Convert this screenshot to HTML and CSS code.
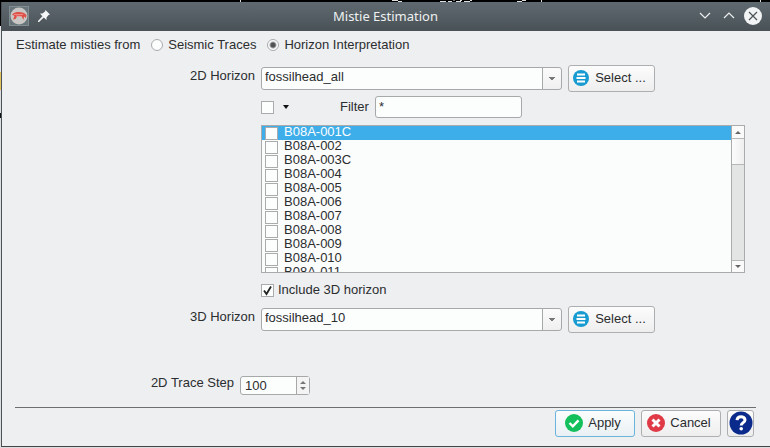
FILE: index.html
```html
<!DOCTYPE html>
<html lang="en">
<head>
<meta charset="utf-8">
<title>Mistie Estimation</title>
<link rel="stylesheet" href="styles.css">
</head>
<body>
<svg class="backdrop" height="2" width="770" aria-hidden="true"><path d="M240.500 0v2M541.500 0v2M760.500 0v2M392 .5h6M398 1.500h4M440 1.500h6M453 0h2M460 .5h2M470 .5h2M448 1.500h4M456 1.500h5M464 1.500h6M517 1.500h5M522 .5h4" stroke="#ddd"/></svg>
<main class="window">
  <header class="titlebar">
    <div class="title-left">
      <svg width="20" height="20" viewBox="0 0 20 20" aria-hidden="true"><rect x=".5" y=".5" width="19" height="19" fill="#68757a" stroke="#7f8d91"/><circle cx="10" cy="10" r="8.500" fill="#c9c7c5"/><path d="M3 8.500c2-2 4-2.500 7-2.500s6 1 7.500 3l-.5 3-2-1.500-.5 3.500-2-3.500-4-.5-2 3-2.500.5 1.500-3.500z" fill="#df5148"/><path d="M5 8.500h9M7 10l6 .5" stroke="#f4a49d" stroke-width=".7"/></svg>
      <svg width="12" height="12" viewBox="0 0 12 12" aria-hidden="true"><path d="M7.500 0L12 4.500 10.500 5 8.500 7.500V10L5.800 7.600 1 12H0v-1l4.400-4.800L2 3.500h2.500L7 1.500z" fill="#f5f7f8"/></svg>
    </div>
    <h1>Mistie Estimation</h1>
    <div class="title-right">
      <button class="wm" aria-label="Minimize"><svg width="18" height="18" viewBox="0 0 18 18"><path d="M4 6l5 5 5-5" fill="none" stroke="#eef0f1" stroke-width="1.200"/></svg></button>
      <button class="wm" aria-label="Maximize"><svg width="18" height="18" viewBox="0 0 18 18"><path d="M4 11l5-5 5 5" fill="none" stroke="#eef0f1" stroke-width="1.200"/></svg></button>
      <button class="wm" aria-label="Close"><svg width="18" height="18" viewBox="0 0 18 18"><circle cx="9" cy="9" r="9" fill="#f1f3f4"/><path d="M5 5l8 8M13 5l-8 8" stroke="#4b5358" stroke-width="1.200"/></svg></button>
    </div>
  </header>
  <form class="content">
    <div class="source" role="radiogroup" aria-labelledby="source-label">
      <span id="source-label">Estimate misties from</span>
      <label><input type="radio" name="source">Seismic Traces</label>
      <label><input type="radio" name="source" checked>Horizon Interpretation</label>
    </div>
    <div class="fields">
      <label class="caption" for="h2d">2D Horizon</label>
      <div class="picker">
        <select id="h2d"><option>fossilhead_all</option></select>
        <button type="button" class="btn select"><svg width="16" height="16" viewBox="0 0 16 16"><circle cx="8" cy="8" r="8" fill="#189bd1"/><path d="M4 4.500h8M3.500 8h9M4 11.500h8" stroke="#fff" stroke-width="2"/></svg>Select ...</button>
      </div>
      <div class="filter">
        <input type="checkbox" aria-label="Select all">
        <button type="button" class="menu" aria-label="Selection menu"><svg width="6" height="4" viewBox="0 0 6 4"><path d="M0 0h6L3 4z" fill="#111"/></svg></button>
        <label for="filter">Filter</label>
        <input type="text" id="filter" value="*">
      </div>
      <div class="listbox">
        <ul>
          <li class="current"><label><input type="checkbox">B08A-001C</label></li>
          <li><label><input type="checkbox">B08A-002</label></li>
          <li><label><input type="checkbox">B08A-003C</label></li>
          <li><label><input type="checkbox">B08A-004</label></li>
          <li><label><input type="checkbox">B08A-005</label></li>
          <li><label><input type="checkbox">B08A-006</label></li>
          <li><label><input type="checkbox">B08A-007</label></li>
          <li><label><input type="checkbox">B08A-008</label></li>
          <li><label><input type="checkbox">B08A-009</label></li>
          <li><label><input type="checkbox">B08A-010</label></li>
          <li><label><input type="checkbox">B08A-011</label></li>
        </ul>
        <div class="scroll">
          <button type="button" aria-label="Scroll up"><svg width="6" height="3" viewBox="0 0 6 3"><path d="M0 3h6L3 0z" fill="#666"/></svg></button>
          <div class="thumb"></div>
          <button type="button" class="down" aria-label="Scroll down"><svg width="6" height="3" viewBox="0 0 6 3"><path d="M0 0h6L3 3z" fill="#666"/></svg></button>
        </div>
      </div>
      <label class="include"><input type="checkbox" checked>Include 3D horizon</label>
      <label class="caption" for="h3d">3D Horizon</label>
      <div class="picker">
        <select id="h3d"><option>fossilhead_10</option></select>
        <button type="button" class="btn select"><svg width="16" height="16" viewBox="0 0 16 16"><circle cx="8" cy="8" r="8" fill="#189bd1"/><path d="M4 4.500h8M3.500 8h9M4 11.500h8" stroke="#fff" stroke-width="2"/></svg>Select ...</button>
      </div>
    </div>
    <div class="step">
      <label for="step">2D Trace Step</label>
      <div class="spin">
        <input type="text" inputmode="numeric" id="step" value="100">
        <div class="arrows">
          <button type="button" aria-label="Increase"><svg width="6" height="3" viewBox="0 0 6 3"><path d="M0 3h6L3 0z" fill="#777"/></svg></button>
          <button type="button" aria-label="Decrease"><svg width="6" height="3" viewBox="0 0 6 3"><path d="M0 0h6L3 3z" fill="#777"/></svg></button>
        </div>
      </div>
    </div>
    <footer>
      <button type="button" class="btn action apply"><svg width="18" height="18" viewBox="0 0 18 18"><circle cx="9" cy="9" r="9" fill="#13c05b"/><path d="M4.500 9l3.300 3.300 5.700-6" fill="none" stroke="#fff" stroke-width="2.400"/></svg>Apply</button>
      <button type="button" class="btn action"><svg width="18" height="18" viewBox="0 0 18 18"><circle cx="9" cy="9" r="9" fill="#df3a46"/><path d="M5.500 5.500l7 7M12.500 5.500l-7 7" stroke="#fff" stroke-width="3"/></svg>Cancel</button>
      <button type="button" class="btn help" aria-label="Help"><svg width="24" height="24" viewBox="0 0 24 24"><circle cx="12" cy="12" r="11.500" fill="#0b2b8c"/><path d="M8 9.200C8.200 6.800 10 5.700 12 5.700s4 1.200 4 3.200c0 2.700-3.800 2.700-3.800 5.600" fill="none" stroke="#fff" stroke-width="3"/><circle cx="12.200" cy="17.700" r="1.800" fill="#fff"/></svg></button>
    </footer>
  </form>
</main>
</body>
</html>
```
FILE: styles.css
```css
* {
  box-sizing: border-box;
}

body {
  margin: 0;
  padding: 2px 0 0 1px;
  min-height: 100vh;
  background: linear-gradient(#000 26px, #e8e8e8 26px, #e8e8e8 72px, #e5c35d 72px, #e5c35d 90px, #ddd 90px, #ddd 113px, #111 113px, #111 118px, #ddd 118px);
  color: #2b2d2f;
  font: 13px/16px "Liberation Sans", Arial, sans-serif;
}

button,
input,
select {
  margin: 0;
  padding: 0;
  color: inherit;
  font: inherit;
}

button {
  display: flex;
  align-items: center;
  justify-content: center;
  border: 0;
  background: none;
}

svg {
  display: block;
  flex: none;
}

.backdrop {
  position: absolute;
  top: 0;
  left: 0;
  max-width: 100%;
}

.window {
  border-left: 1px solid #4b5358;
  border-bottom: 1px solid #3f4549;
  background: #eeeff1;
}

.titlebar {
  display: grid;
  grid-template-columns: 1fr auto 1fr;
  align-items: center;
  height: 29px;
  padding: 0 8px 2px 7px;
  background: linear-gradient(#5f6a70, #495156);
}

.title-left,
.title-right {
  display: flex;
  align-items: center;
  gap: 9px;
}

.title-right {
  justify-content: flex-end;
  gap: 6px;
}

h1 {
  margin: 0;
  color: #eef0f1;
  font: 13px/18px "Noto Sans", sans-serif;
}

input[type="radio"],
input[type="checkbox"] {
  appearance: none;
  flex: none;
  width: 13px;
  height: 13px;
  border: 1px solid #a9abad;
  background: #fcfdfd;
}

input[type="radio"] {
  width: 12px;
  height: 12px;
  border-radius: 50%;
}

input[type="radio"]:checked {
  background: radial-gradient(circle, #505254 2px, #fcfdfd 4px);
}

.content {
  padding: 6px 14px 9px 13px;
}

.source,
.source label {
  display: flex;
  align-items: center;
  gap: 5px;
}

.source {
  gap: 11px;
  padding-left: 1px;
}

.fields {
  display: grid;
  grid-template-columns: 240px 1fr;
  column-gap: 6px;
  margin-top: 12px;
}

.fields > * {
  grid-column: 2;
}

.fields > .caption {
  grid-column: 1;
  padding-top: 3px;
  text-align: right;
}

.picker {
  display: flex;
  align-items: center;
  gap: 6px;
}

select {
  appearance: none;
  width: 301px;
  height: 23px;
  padding: 0 22px 3px 3px;
  border: 1px solid #a6a8aa;
  border-radius: 3px;
  background:
    linear-gradient(#777, #777) right 6px top 9px / 6px 1px no-repeat,
    linear-gradient(#777, #777) right 7px top 10px / 4px 1px no-repeat,
    linear-gradient(#777, #777) right 8px top 11px / 2px 1px no-repeat,
    linear-gradient(#a6a8aa, #a6a8aa) right 18px top 0 / 1px 100% no-repeat,
    linear-gradient(#fbfbfb, #f0f0f1) right / 18px 100% no-repeat,
    #fcfdfd;
}

.btn {
  height: 27px;
  padding-bottom: 1px;
  border: 1px solid #acaeb0;
  border-radius: 3px;
  background: linear-gradient(#fcfcfc, #eeeeef);
}

.select {
  gap: 6px;
  width: 87px;
  padding-right: 4px;
}

.filter {
  display: flex;
  align-items: center;
  margin-top: 4px;
}

.menu {
  width: 24px;
  height: 16px;
}

.filter label {
  margin: 0 6px 0 42px;
}

.filter input[type="text"] {
  width: 147px;
  height: 22px;
  padding: 0 3px 2px;
  border: 1px solid #a6a8aa;
  border-radius: 3px;
  background: #fcfdfd;
}

.listbox {
  display: flex;
  height: 148px;
  margin: 7px 11px 0 0;
  border: 1px solid #a9abad;
  background: #fbfcfc;
}

.listbox ul {
  flex: 1;
  margin: 0;
  padding: 0;
  overflow: hidden;
  list-style: none;
}

.listbox label {
  display: flex;
  align-items: flex-end;
  gap: 6px;
  height: 14px;
  padding-left: 3px;
  line-height: 16px;
}

.current {
  background: #3daee9;
  color: #fcfdfd;
}

.scroll {
  display: flex;
  flex-direction: column;
  width: 13px;
  border-left: 1px solid #a9abad;
  background: #e3e4e4;
}

.scroll button {
  height: 12px;
  background: #fafafa;
}

.scroll .down {
  margin-top: auto;
  border-top: 1px solid #b5b7b8;
}

.thumb {
  height: 27px;
  border: solid #b5b7b8;
  border-width: 1px 0;
  background: linear-gradient(90deg, #fcfcfc, #efefef);
}

.include {
  display: flex;
  align-items: center;
  gap: 4px;
  margin: 9px 0 8px;
}

.include input:checked {
  background: #fcfdfd url("data:image/svg+xml,%3Csvg xmlns='http://www.w3.org/2000/svg' viewBox='0 0 11 11'%3E%3Cpath d='M2 5.500l2.500 3.500L9 1.500' fill='none' stroke='%23222' stroke-width='1.800'/%3E%3C/svg%3E") center / 11px 11px no-repeat;
}

.step {
  display: flex;
  gap: 6px;
  margin-top: 42px;
}

.step > label {
  width: 219px;
  text-align: right;
}

.spin {
  display: flex;
  width: 70px;
  height: 19px;
  margin-top: 1px;
  border: 1px solid #a6a8aa;
  border-radius: 3px;
  background: #fcfdfd;
}

.spin input {
  flex: 1;
  min-width: 0;
  padding: 0 4px;
  border: 0;
  background: none;
}

.arrows {
  display: flex;
  flex-direction: column;
  justify-content: center;
  gap: 3px;
  width: 13px;
  border-left: 1px solid #a6a8aa;
  background: #f4f4f5;
}

footer {
  display: flex;
  justify-content: flex-end;
  gap: 6px;
  margin-top: 12px;
  padding: 2px 2px 0 0;
  border-top: 1px solid #6c6e70;
}

.action {
  gap: 5px;
  width: 80px;
  padding-right: 4px;
}

.apply {
  border-color: #6bb4dc;
  background: linear-gradient(#fcfdfd, #e9f0f4);
}

.help {
  width: 27px;
}
```
